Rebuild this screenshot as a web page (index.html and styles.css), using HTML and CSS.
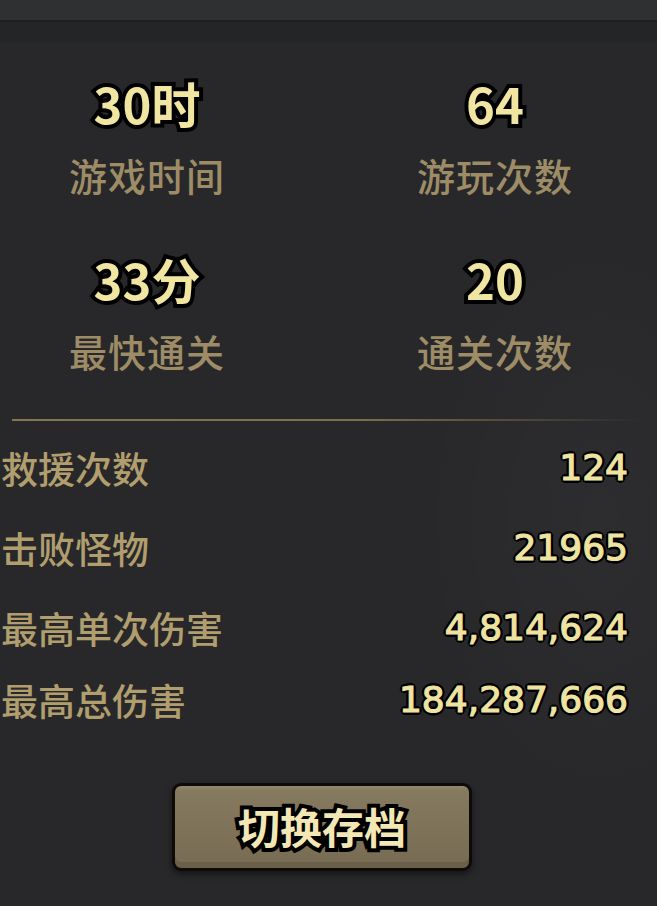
FILE: index.html
```html
<!DOCTYPE html>
<html lang="zh-CN">
<head>
<meta charset="utf-8">
<title>存档统计</title>
<link rel="stylesheet" href="styles.css">
</head>
<body>
<div class="panel">
  <div class="panel-top"></div>
  <div class="panel-band"></div>

  <section class="stats">
    <div class="stat">
      <div class="stat-value">30时</div>
      <div class="stat-label">游戏时间</div>
    </div>
    <div class="stat">
      <div class="stat-value">64</div>
      <div class="stat-label">游玩次数</div>
    </div>
    <div class="stat">
      <div class="stat-value">33分</div>
      <div class="stat-label">最快通关</div>
    </div>
    <div class="stat">
      <div class="stat-value">20</div>
      <div class="stat-label">通关次数</div>
    </div>
  </section>

  <div class="divider"></div>

  <section class="records">
    <div class="record">
      <span class="record-label">救援次数</span>
      <span class="record-value">124</span>
    </div>
    <div class="record">
      <span class="record-label">击败怪物</span>
      <span class="record-value">21965</span>
    </div>
    <div class="record">
      <span class="record-label">最高单次伤害</span>
      <span class="record-value">4,814,624</span>
    </div>
    <div class="record record-last">
      <span class="record-label">最高总伤害</span>
      <span class="record-value">184,287,666</span>
    </div>
  </section>

  <div class="actions">
    <button class="switch-btn" type="button">切换存档</button>
  </div>
</div>
</body>
</html>
```
FILE: styles.css
```css
html, body {
  margin: 0;
  padding: 0;
}

body {
  width: 657px;
  height: 906px;
  overflow: hidden;
  background: #28282a;
  font-family: "Noto Sans CJK SC", "Noto Sans", sans-serif;
}

.panel {
  height: 906px;
  background:
    radial-gradient(ellipse 260px 420px at 600px 520px, rgba(255,255,255,0.025), transparent 70%),
    #28282a;
}

.panel-top {
  height: 20px;
  background: #2f3032;
}

.panel-band {
  height: 20px;
  border-top: 2px solid #1d1e20;
  background: #242527;
}

/* two-column summary of play stats */
.stats {
  display: grid;
  grid-template-columns: 200px 200px;
  column-gap: 148px;
  row-gap: 56px;
  padding: 37px 0 0 47px;
}

.stat {
  display: flex;
  flex-direction: column;
  align-items: center;
  gap: 24px;
}

.stat-value {
  font-size: 49px;
  font-weight: 700;
  line-height: 48px;
  color: #f1e5a2;
  -webkit-text-stroke: 8px #000;
  paint-order: stroke fill;
}

.stat-label {
  font-size: 38px;
  font-weight: 500;
  line-height: 48px;
  letter-spacing: 1px;
  color: #9d8c66;
}

.divider {
  height: 2px;
  margin: 44px 16px 0 12px;
  background: linear-gradient(90deg, #85764f 0%, #7c6f4c 55%, rgba(124,111,76,0.35) 85%, rgba(124,111,76,0) 100%);
}

/* label / value rows */
.records {
  display: flex;
  flex-direction: column;
  gap: 32px;
  padding: 23px 29px 0 1px;
}

.record {
  display: flex;
  justify-content: space-between;
  align-items: center;
  height: 48px;
}

.record-last {
  margin-top: -8px;
}

.record-label {
  font-size: 37px;
  font-weight: 500;
  color: #b19e6e;
  line-height: 48px;
}

.record-value {
  font-family: "DejaVu Sans", sans-serif;
  font-size: 36px;
  line-height: 48px;
  color: #efe3a1;
  -webkit-text-stroke: 1.2px #efe3a1;
  text-shadow:
    3px 0 0 #000, -3px 0 0 #000, 0 3px 0 #000, 0 -3px 0 #000,
    2px 2px 0 #000, -2px 2px 0 #000, 2px -2px 0 #000, -2px -2px 0 #000,
    0 0 3px #000;
}

.actions {
  display: flex;
  padding: 59px 0 0 172px;
}

.switch-btn {
  width: 300px;
  height: 88px;
  box-sizing: border-box;
  border: 3px solid #0d0b08;
  border-radius: 9px;
  background: linear-gradient(180deg, #95876a 0px, #857a5f 5px, #7d7258 60%, #776c53 100%);
  box-shadow: inset 0 -6px 0 #6a5f48, 0 3px 6px rgba(0,0,0,0.5);
  font-family: "Noto Sans CJK SC", sans-serif;
  font-size: 42px;
  font-weight: 700;
  color: #f4e7b6;
  -webkit-text-stroke: 8px #000;
  paint-order: stroke fill;
  padding: 0 0 4px 0;
  cursor: pointer;
}
```
